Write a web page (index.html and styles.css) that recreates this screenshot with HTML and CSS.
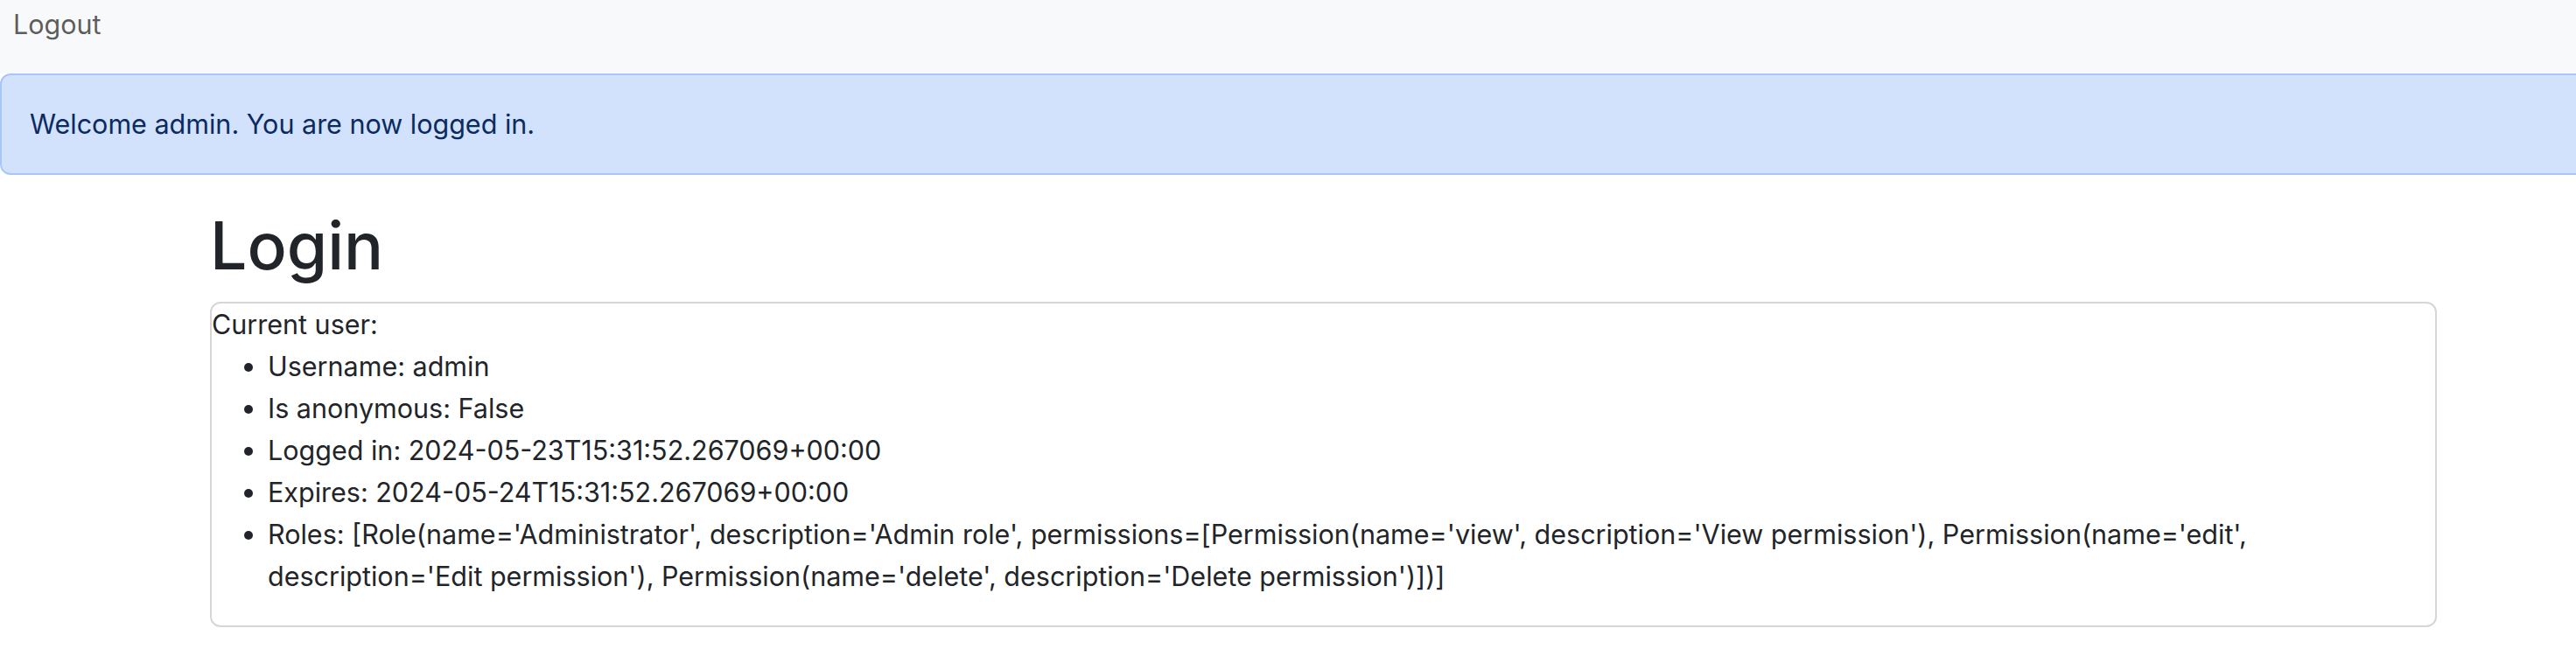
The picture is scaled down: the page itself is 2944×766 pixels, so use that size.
FILE: index.html
```html
<!DOCTYPE html>
<html lang="en">
<head>
<meta charset="utf-8">
<title>Login</title>
<link rel="stylesheet" href="styles.css">
</head>
<body>
<nav class="navbar">
  <a class="nav-link" href="#">Logout</a>
</nav>
<div class="alert">Welcome admin. You are now logged in.</div>
<main class="container">
  <h1 class="title">Login</h1>
  <div class="user-box">
    <div class="user-label">Current user:</div>
    <ul class="user-list">
      <li>Username: admin</li>
      <li>Is anonymous: False</li>
      <li>Logged in: 2024-05-23T15:31:52.267069+00:00</li>
      <li>Expires: 2024-05-24T15:31:52.267069+00:00</li>
      <li>Roles: [Role(name='Administrator', description='Admin role', permissions=[Permission(name='view', description='View permission'), Permission(name='edit', description='Edit permission'), Permission(name='delete', description='Delete permission')])]</li>
    </ul>
  </div>
</main>
</body>
</html>
```
FILE: styles.css
```css
html {
  overflow: hidden;
}
body {
  margin: 0;
  font-family: Inter, "Liberation Sans", Arial, sans-serif;
  font-size: 30.5px;
  line-height: 48px;
  color: #212529;
  background: #ffffff;
}
.navbar {
  box-sizing: border-box;
  height: 84px;
  padding: 4px 15px 0;
  background: #f8f9fa;
}
.nav-link {
  color: rgba(0, 0, 0, 0.65);
  text-decoration: none;
}
.alert {
  box-sizing: border-box;
  width: calc(100% + 40px);
  padding: 32px;
  border: 2px solid #a8c6f8;
  border-radius: 12px;
  background: #d3e2fc;
  color: #0a2b60;
  margin-bottom: 33px;
}
.container {
  box-sizing: border-box;
  width: 2545px;
  margin-left: 240px;
}
.title {
  margin: 0 0 16px;
  font-size: 75px;
  line-height: 96px;
  font-weight: 500;
  color: #212529;
}
.user-box {
  border: 2px solid #d6d6d6;
  border-radius: 12px;
}
.user-label {
  margin: 0;
}
.user-list {
  margin: 0 0 32px;
  padding-left: 64px;
}
.user-list li .dt {
  letter-spacing: 0.2px;
}
```
